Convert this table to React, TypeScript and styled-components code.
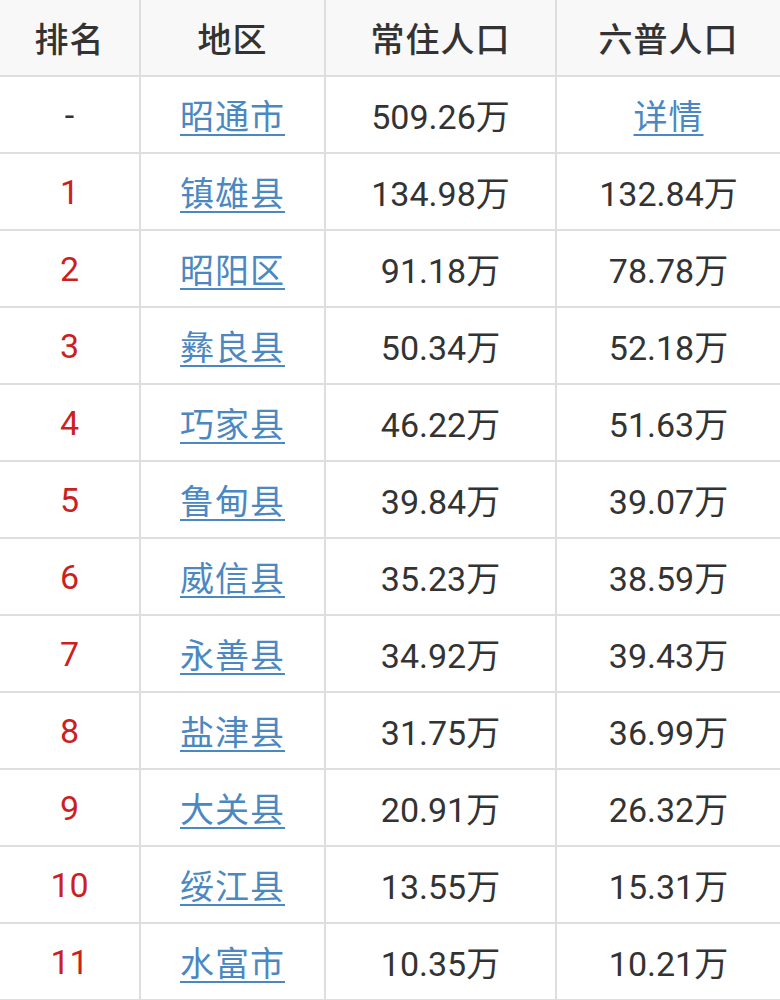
import React from "react";
import styled, { createGlobalStyle } from "styled-components";

const Global = createGlobalStyle`
  html, body { margin: 0; padding: 0; background: #ffffff; }
  body { font-family: Roboto, "Noto Sans CJK SC", sans-serif; }
`;

const Table = styled.div`
  display: grid;
  grid-template-columns: 139px 183px 229px 1fr;
  grid-auto-rows: 75px;
  gap: 2px;
  background: #dedede;
  width: 780px;
  padding-bottom: 2px;
`;

const HeadCell = styled.div`
  display: flex;
  align-items: center;
  justify-content: center;
  background: #f8f8f8;
  color: #333333;
  font-family: "Noto Sans CJK SC", sans-serif;
  font-weight: 500;
  font-size: 34px;
  letter-spacing: 1px;
`;

const Cell = styled.div<{ $tone?: "rank" | "plain" }>`
  display: flex;
  align-items: center;
  justify-content: center;
  background: #ffffff;
  color: ${(p) => (p.$tone === "rank" ? "#cc1f1f" : "#333333")};
  font-family: Roboto, "Noto Sans CJK SC", sans-serif;
  font-size: 34px;
`;

const Link = styled.a`
  color: #4b88c2;
  font-family: "Noto Sans CJK SC", sans-serif;
  font-size: 34px;
  text-decoration: underline;
  text-decoration-thickness: 2px;
  text-underline-offset: 5px;
  letter-spacing: 1px;
`;

type Row = { rank: string; area: string; now: string; six: string | null };

const rows: Row[] = [
  { rank: "-", area: "昭通市", now: "509.26万", six: null },
  { rank: "1", area: "镇雄县", now: "134.98万", six: "132.84万" },
  { rank: "2", area: "昭阳区", now: "91.18万", six: "78.78万" },
  { rank: "3", area: "彝良县", now: "50.34万", six: "52.18万" },
  { rank: "4", area: "巧家县", now: "46.22万", six: "51.63万" },
  { rank: "5", area: "鲁甸县", now: "39.84万", six: "39.07万" },
  { rank: "6", area: "威信县", now: "35.23万", six: "38.59万" },
  { rank: "7", area: "永善县", now: "34.92万", six: "39.43万" },
  { rank: "8", area: "盐津县", now: "31.75万", six: "36.99万" },
  { rank: "9", area: "大关县", now: "20.91万", six: "26.32万" },
  { rank: "10", area: "绥江县", now: "13.55万", six: "15.31万" },
  { rank: "11", area: "水富市", now: "10.35万", six: "10.21万" },
];

export default function App() {
  return (
    <>
      <Global />
      <Table>
        <HeadCell>排名</HeadCell>
        <HeadCell>地区</HeadCell>
        <HeadCell>常住人口</HeadCell>
        <HeadCell>六普人口</HeadCell>
        {rows.map((r) => (
          <React.Fragment key={r.area}>
            <Cell $tone={r.rank === "-" ? "plain" : "rank"}>{r.rank}</Cell>
            <Cell>
              <Link href="#">{r.area}</Link>
            </Cell>
            <Cell>{r.now}</Cell>
            <Cell>{r.six ? r.six : <Link href="#">详情</Link>}</Cell>
          </React.Fragment>
        ))}
      </Table>
    </>
  );
}
